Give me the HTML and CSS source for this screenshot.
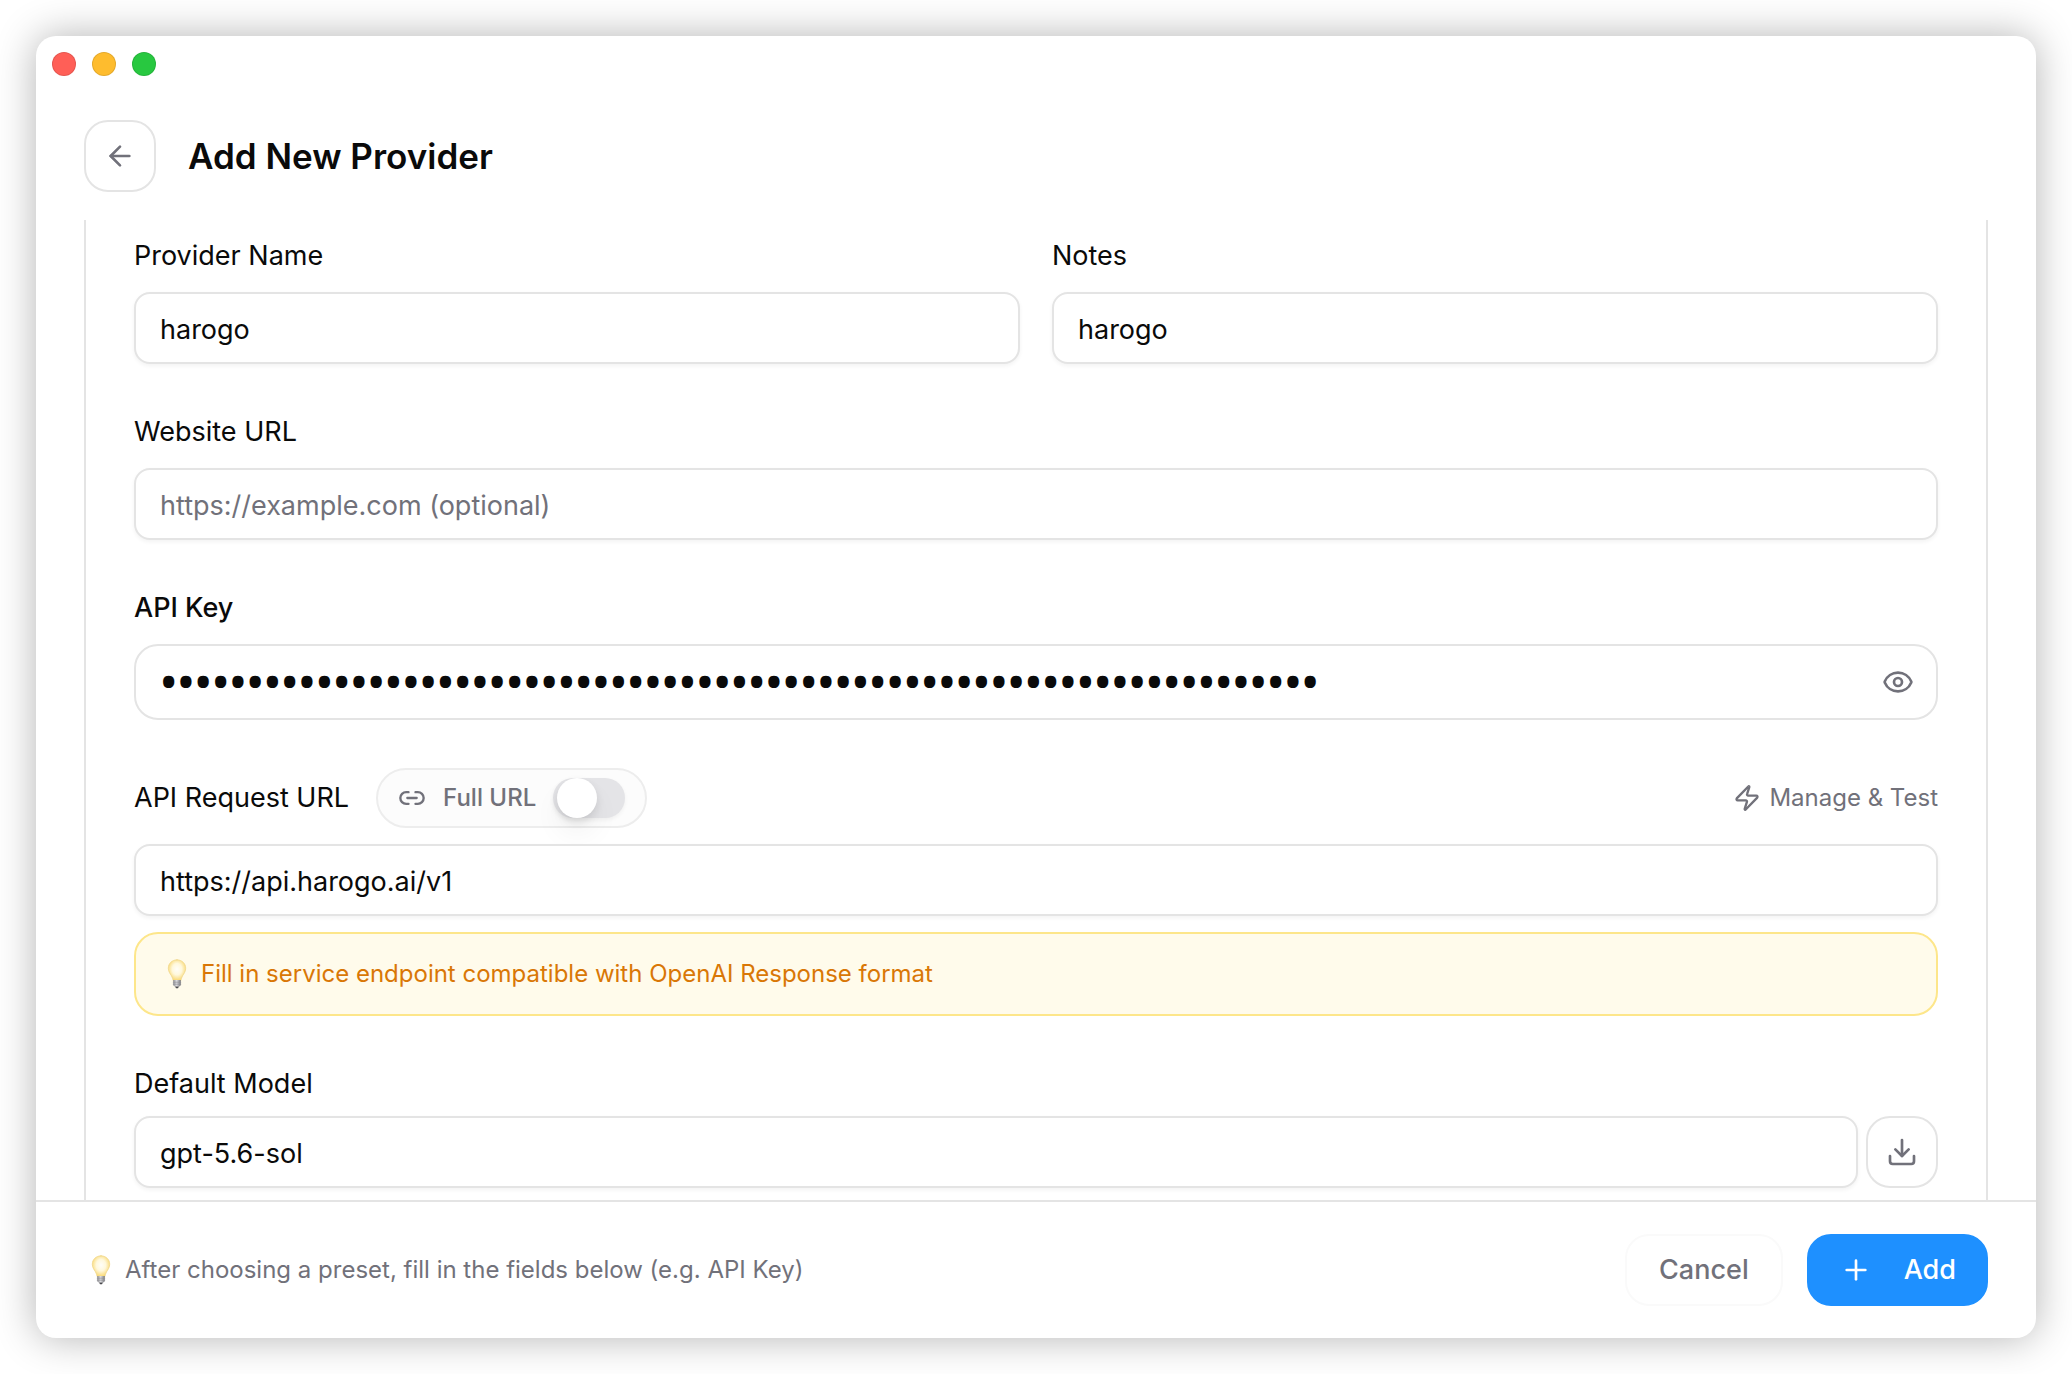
FILE: index.html
```html
<!DOCTYPE html>
<html lang="en">
<head>
    <meta charset="UTF-8">
    <meta name="viewport" content="width=device-width, initial-scale=1.0">
    <title>Add New Provider</title>
    <link rel="stylesheet" href="styles.css">
</head>
<body>
    <!-- Shared bulb icon -->
    <svg class="defs" width="0" height="0" aria-hidden="true">
        <defs>
            <radialGradient id="glass" cx="50%" cy="45%" r="55%">
                <stop offset="0" stop-color="#fffef8"/>
                <stop offset="0.5" stop-color="#fff8dc"/>
                <stop offset="1" stop-color="#f9d871"/>
            </radialGradient>
            <linearGradient id="cap" x1="0" x2="1" y1="0" y2="0">
                <stop offset="0" stop-color="#8c8c90"/>
                <stop offset="0.45" stop-color="#dcdce0"/>
                <stop offset="1" stop-color="#77777b"/>
            </linearGradient>
            <symbol id="bulb" viewBox="0 0 20 30">
                <path d="M10 .8C5.100.8 1.300 4.500 1.300 9.200c0 3.300 1.700 5.200 3.200 7.700.8 1.400 1.300 3.100 1.700 4.700h7.600c.4-1.600.9-3.300 1.700-4.700 1.500-2.500 3.200-4.400 3.200-7.700C18.700 4.500 14.900.8 10 .8z" fill="url(#glass)" stroke="#f0d78c" stroke-width=".8"/>
                <path d="M6.200 21h7.600v4.600c0 1-.8 1.700-1.700 2H7.900c-.9-.3-1.700-1-1.700-2z" fill="url(#cap)"/>
                <path d="M6.200 23.200h7.600M6.200 25.200h7.600" stroke="#8a8a8e" stroke-width=".6"/>
                <path d="M8 27.500h4l-1 1.800H9z" fill="#4a4a4e"/>
            </symbol>
        </defs>
    </svg>

    <div class="window">
        <div class="titlebar">
            <span class="light light-red"></span>
            <span class="light light-yellow"></span>
            <span class="light light-green"></span>
        </div>

        <header class="header">
            <button class="icon-button" type="button" aria-label="Back">
                <svg class="icon-lg" viewBox="0 0 24 24"><path d="m12 19-7-7 7-7"/><path d="M19 12H5"/></svg>
            </button>
            <h1>Add New Provider</h1>
        </header>

        <main class="content">
            <form class="card" id="provider-form">
                <div class="field-row">
                    <div class="field">
                        <label for="name">Provider Name</label>
                        <input class="input" id="name" type="text" value="harogo">
                    </div>
                    <div class="field">
                        <label for="notes">Notes</label>
                        <input class="input" id="notes" type="text" value="harogo">
                    </div>
                </div>

                <div class="field">
                    <label for="website">Website URL</label>
                    <input class="input" id="website" type="text" placeholder="https://example.com (optional)">
                </div>

                <div class="field">
                    <label class="label-strong" for="api-key">API Key</label>
                    <div class="key-box">
                        <input class="key-input" id="api-key" type="password" value="0000000000000000000000000000000000000000000000000000000000000000000">
                        <button class="plain-button" type="button" aria-label="Show API key">
                            <svg class="icon-lg" viewBox="0 0 24 24"><path d="M2.062 12.348a1 1 0 0 1 0-.696 10.750 10.750 0 0 1 19.876 0 1 1 0 0 1 0 .696 10.750 10.750 0 0 1-19.876 0"/><circle cx="12" cy="12" r="3"/></svg>
                        </button>
                    </div>
                </div>

                <div class="field">
                    <div class="url-row">
                        <label for="api-url">API Request URL</label>
                        <label class="pill" for="full-url">
                            <svg class="icon-sm" viewBox="0 0 24 24"><path d="M9 17H7A5 5 0 0 1 7 7h2"/><path d="M15 7h2a5 5 0 1 1 0 10h-2"/><path d="M8 12h8"/></svg>
                            <span>Full URL</span>
                            <input class="switch" id="full-url" type="checkbox">
                        </label>
                        <button class="plain-button manage" type="button">
                            <svg class="icon-sm" viewBox="0 0 24 24"><path d="M4 14a1 1 0 0 1-.78-1.630l9.900-10.200a.5.5 0 0 1 .86.460l-1.920 6.020A1 1 0 0 0 13 10h7a1 1 0 0 1 .78 1.630l-9.900 10.200a.5.5 0 0 1-.86-.460l1.920-6.020A1 1 0 0 0 11 14z"/></svg>
                            Manage &amp; Test
                        </button>
                    </div>
                    <input class="input" id="api-url" type="text" value="https://api.harogo.ai/v1">
                    <div class="hint">
                        <svg class="bulb"><use href="#bulb"/></svg>
                        <span>Fill in service endpoint compatible with OpenAI Response format</span>
                    </div>
                </div>

                <div class="field field-model">
                    <label for="model">Default Model</label>
                    <div class="model-row">
                        <input class="input" id="model" type="text" value="gpt-5.6-sol">
                        <button class="icon-button" type="button" aria-label="Fetch models">
                            <svg class="icon-lg" viewBox="0 0 24 24"><path d="M21 15v4a2 2 0 0 1-2 2H5a2 2 0 0 1-2-2v-4"/><path d="m7 10 5 5 5-5"/><path d="M12 15V3"/></svg>
                        </button>
                    </div>
                </div>
            </form>
        </main>

        <footer class="footer">
            <p class="tip">
                <svg class="bulb"><use href="#bulb"/></svg>
                <span>After choosing a preset, fill in the fields below (e.g. API Key)</span>
            </p>
            <button class="button button-cancel" type="button">Cancel</button>
            <button class="button button-add" type="submit" form="provider-form">
                <svg class="icon-lg" viewBox="0 0 24 24"><path d="M5 12h14"/><path d="M12 5v14"/></svg>
                Add
            </button>
        </footer>
    </div>
</body>
</html>
```
FILE: styles.css
```css
* {
    margin: 0;
    padding: 0;
    box-sizing: border-box;
}

body {
    font-family: Inter, "Liberation Sans", sans-serif;
    font-size: 27px;
    line-height: 40px;
    color: #0a0a0a;
    background: #fff;
    height: 100vh;
    padding: 36px;
}

button,
input {
    font: inherit;
    color: inherit;
}

button {
    cursor: pointer;
}

svg {
    flex: none;
    fill: none;
    stroke: currentColor;
    stroke-width: 2;
    stroke-linecap: round;
    stroke-linejoin: round;
}

.defs {
    position: absolute;
}

/* Window */
.window {
    height: 100%;
    display: flex;
    flex-direction: column;
    background: #fff;
    border-radius: 20px;
    box-shadow: 0 0 40px rgba(0, 0, 0, 0.3);
    overflow: hidden;
}

.titlebar {
    display: flex;
    gap: 16px;
    height: 56px;
    padding: 16px;
}

.light {
    width: 24px;
    height: 24px;
    border-radius: 50%;
    border: 1px solid rgba(0, 0, 0, 0.1);
}

.light-red {
    background: #ff5f57;
}

.light-yellow {
    background: #febc2e;
}

.light-green {
    background: #28c840;
}

.header {
    display: flex;
    align-items: center;
    gap: 32px;
    padding: 28px 48px;
}

h1 {
    font-size: 35px;
    line-height: 56px;
    font-weight: 600;
}

.icon-button {
    flex: none;
    display: flex;
    align-items: center;
    justify-content: center;
    width: 72px;
    height: 72px;
    color: #71717a;
    background: #fff;
    border: 2px solid #e4e4e4;
    border-radius: 24px;
}

.icon-sm {
    width: 28px;
    height: 28px;
}

.icon-lg {
    width: 32px;
    height: 32px;
}

/* Form */
.content {
    flex: 1;
    min-height: 0;
    display: flex;
    padding: 0 48px;
    overflow: hidden;
}

.card {
    flex: 1;
    display: flex;
    flex-direction: column;
    gap: 48px;
    padding: 16px 48px 0;
    border: solid #e4e4e4;
    border-width: 0 2px;
}

.field-row {
    display: grid;
    grid-template-columns: 1fr 1fr;
    gap: 32px;
}

.field {
    display: flex;
    flex-direction: column;
    gap: 16px;
}

.field-model {
    gap: 12px;
}

.label-strong {
    font-weight: 500;
}

.input {
    width: 100%;
    height: 72px;
    padding: 2px 24px 0;
    background: #fff;
    border: 2px solid #e4e4e4;
    border-radius: 16px;
    box-shadow: 0 2px 4px rgba(0, 0, 0, 0.05);
    outline: none;
}

.input::placeholder {
    color: #71717a;
    opacity: 1;
}

.key-box {
    display: flex;
    align-items: center;
    height: 76px;
    padding: 0 22px 0 24px;
    border: 2px solid #e4e4e4;
    border-radius: 24px;
}

/* Larger face so that the masking dots read clearly */
.key-input {
    flex: 1;
    min-width: 0;
    height: 72px;
    padding-bottom: 4px;
    font-family: "Open Sans", sans-serif;
    font-size: 46px;
    font-weight: 600;
    border: none;
    outline: none;
    background: none;
}

.plain-button {
    display: flex;
    align-items: center;
    gap: 8px;
    color: #71717a;
    background: none;
    border: none;
}

.url-row {
    display: flex;
    align-items: center;
    gap: 27px;
}

.pill {
    display: flex;
    align-items: center;
    gap: 17px;
    height: 60px;
    padding: 0 20px;
    font-size: 24px;
    font-weight: 500;
    color: #71717a;
    background: #fcfcfc;
    border: 2px solid #ededed;
    border-radius: 30px;
}

.switch {
    appearance: none;
    display: flex;
    align-items: center;
    width: 72px;
    height: 40px;
    padding: 0 4px;
    background: #e4e4e7;
    border-radius: 20px;
    box-shadow: 0 2px 4px rgba(0, 0, 0, 0.05);
}

.switch::before {
    content: "";
    width: 40px;
    height: 40px;
    border-radius: 50%;
    background: #fff;
    box-shadow: 0 4px 8px rgba(0, 0, 0, 0.1), 0 16px 28px rgba(0, 0, 0, 0.05);
}

.switch:checked {
    justify-content: flex-end;
    background: #1e90ff;
}

.manage {
    margin-left: auto;
    font-size: 24px;
}

.hint {
    display: flex;
    align-items: center;
    gap: 14px;
    height: 84px;
    padding: 0 31px;
    font-size: 24px;
    color: #d97706;
    background: #fffbeb;
    border: 2px solid #fde68a;
    border-radius: 24px;
}

.bulb {
    width: 20px;
    height: 30px;
    stroke: none;
}

.model-row {
    display: flex;
    gap: 8px;
}

/* Footer */
.footer {
    display: flex;
    align-items: center;
    gap: 24px;
    padding: 32px 48px;
    border-top: 2px solid #e4e4e4;
}

.tip {
    flex: 1;
    display: flex;
    align-items: center;
    gap: 14px;
    padding-left: 7px;
    font-size: 24px;
    color: #71717a;
}

.button {
    display: flex;
    align-items: center;
    height: 72px;
    padding: 0 32px;
    font-weight: 500;
    border: 2px solid #fafafa;
    border-radius: 24px;
}

.button-cancel {
    color: #71717a;
    background: #fff;
}

.button-add {
    gap: 32px;
    padding: 0 30px 0 31px;
    color: #fff;
    background: #1e90ff;
    border-color: #1e90ff;
}
```
